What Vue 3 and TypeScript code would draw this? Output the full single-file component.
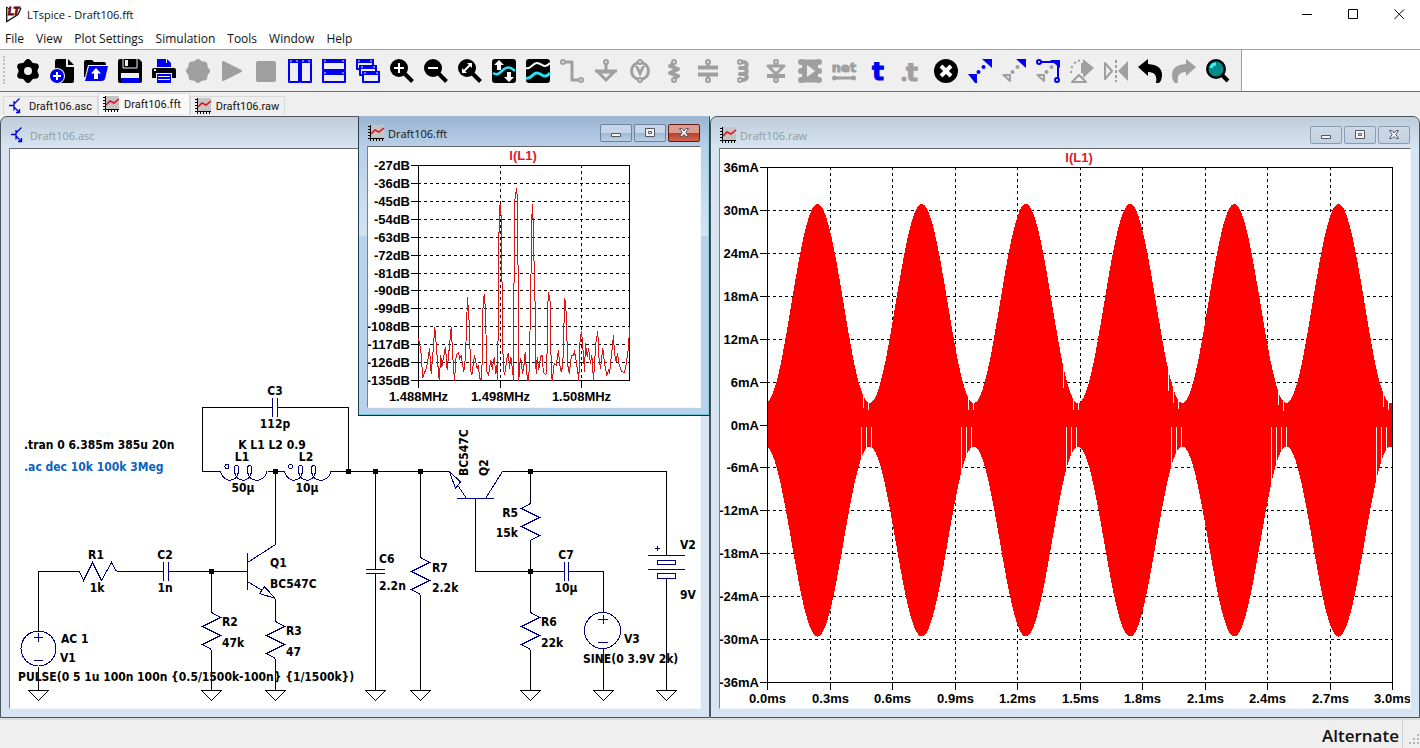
<script setup lang="ts">
interface Shape { d: string; f?: string; s?: string; w?: number }
interface Tool { name: string; off?: boolean; shapes: Shape[]; text?: string; size?: number; tx?: number; ty?: number; color?: string }
interface Label { t: string; x: number; y: number; a?: 'start' | 'middle' | 'end'; c?: string; v?: boolean }

const K = '#000'
const B = '#0000f0'
const G = '#9f9f9f'
const P = '#efefef'

const disc = (x: number, y: number, r: number): string =>
  `M${x - r} ${y}a${r} ${r} 0 1 0 ${2 * r} 0a${r} ${r} 0 1 0 ${-2 * r} 0Z`

function gear(teeth: number, base: number, depth: number): string {
  const pts: string[] = []
  for (let i = 0; i < 96; i++) {
    const a = (i * Math.PI) / 48
    const r = base + depth * Math.cos(teeth * (a - Math.PI / 2))
    pts.push(`${(12 + r * Math.cos(a)).toFixed(2)} ${(12 + r * Math.sin(a)).toFixed(2)}`)
  }
  return 'M' + pts.join('L') + 'Z'
}

const lens: Shape[] = [{ d: disc(9, 9, 9), f: K }, { d: 'M14 14L22.5 22.5', s: K, w: 4 }]
const pin = (x: number, y: number, c: string = G): Shape => ({ d: disc(x, y, 2), s: c, f: P, w: 2 })
const panel = (x: number, y: number, w: number, h: number): Shape[] => [
  { d: `M${x + 1} ${y + 1}h${w - 2}v${h - 2}h${2 - w}Z`, f: P, s: B, w: 2 },
  { d: `M${x} ${y}h${w}v4h${-w}Z`, f: B },
  { d: `M${x + 2} ${y + 2}h2M${x + w - 4} ${y + 2}h2`, s: P, w: 1 },
]

const tools: Tool[] = [
  { name: 'Settings', shapes: [{ d: gear(6, 10.8, 1.3), f: K }, { d: disc(12, 12, 4), f: P }] },
  { name: 'New schematic', shapes: [
    { d: 'M7 0H16V8H24V22Q24 24 22 24H5V2Q5 0 7 0Z', f: K }, { d: 'M18 0L24 6H18Z', f: K },
    { d: disc(7, 17, 8), f: P }, { d: disc(7, 17, 7), f: B }, { d: 'M7 13V21M3 17H11', s: '#fff', w: 2 }] },
  { name: 'Open', shapes: [
    { d: 'M0 3Q0 1 2 1H8L10 3H20Q22 3 22 5V6H4L1 18H0Z', f: K }, { d: 'M5 7H24L21 20Q20 22 18 22H1Z', f: B },
    { d: 'M12 9L17 14.5H14V20H10V14.5H7Z', f: '#fff' }] },
  { name: 'Save', shapes: [
    { d: 'M2 0H21L24 3V22Q24 24 22 24H2Q0 24 0 22V2Q0 0 2 0Z', f: K },
    { d: 'M5 0V9H19V0', s: P, w: 1 }, { d: 'M7 1H10V7H7Z', f: P },
    { d: 'M3 14H21V24H3Z', f: P }, { d: 'M3 19H21V24H3Z', f: B }] },
  { name: 'Print', shapes: [
    { d: 'M5 0H14V4H19V8H5Z', f: B }, { d: 'M15 0L19 4H15Z', f: B }, { d: 'M2 9H22Q24 9 24 11V19H0V11Q0 9 2 9Z', f: K },
    { d: 'M2 11h2', s: P, w: 2 }, { d: 'M4 14H20V24H4Z', f: P }, { d: 'M5 15H19V24H5Z', f: B }, { d: 'M6 17.5H18M6 20.5H18', s: P, w: 1 }] },
  { name: 'Component', off: true, shapes: [{ d: gear(8, 11.3, 0.8), f: G }] },
  { name: 'Run', off: true, shapes: [{ d: 'M3 3L21 12L3 21Z', f: G, s: G, w: 2 }] },
  { name: 'Stop', off: true, shapes: [{ d: 'M4 4H20V21H4Z', f: G, s: G, w: 4 }] },
  { name: 'Tile vertically', shapes: [...panel(0, 0, 12, 24), ...panel(12, 0, 12, 24)] },
  { name: 'Tile horizontally', shapes: [...panel(0, 0, 24, 12), ...panel(0, 12, 24, 12)] },
  { name: 'Cascade', shapes: [...panel(0, 0, 18, 11), ...panel(3, 6, 18, 11), ...panel(6, 12, 18, 12)] },
  { name: 'Zoom in', shapes: [...lens, { d: 'M9 4V14M4 9H14', s: '#fff', w: 2 }] },
  { name: 'Zoom out', shapes: [...lens, { d: 'M4 9H14', s: '#fff', w: 2 }] },
  { name: 'Zoom to fit', shapes: [...lens, { d: 'M6 12L12 6', s: '#fff', w: 2 }, { d: 'M9 4H14V9ZM4 9V14H9Z', f: '#fff' }] },
  { name: 'Autorange', shapes: [
    { d: 'M3 0H21Q24 0 24 3V21Q24 24 21 24H3Q0 24 0 21V3Q0 0 3 0Z', f: K },
    { d: 'M1 14C5 17 8 14 11 11S18 7 23 12', s: '#26e2f4', w: 2.5 },
    { d: 'M7 1L12 6H9V11H5V6H2ZM17 23L12 18H15V13H19V18H22Z', f: '#fff' }] },
  { name: 'Visible traces', shapes: [
    { d: 'M3 0H21Q24 0 24 3V21Q24 24 21 24H3Q0 24 0 21V3Q0 0 3 0Z', f: K },
    { d: 'M0 9C5 11 6 4 11 4S18 11 24 4', s: '#fff', w: 2 }, { d: 'M0 19C5 21 6 14 11 14S18 21 24 14', s: '#26e2f4', w: 3 }] },
  { name: 'Wire', off: true, shapes: [{ d: 'M4 3H12V21H20', s: G, w: 3 }, pin(3, 3), pin(21, 21)] },
  { name: 'Ground', off: true, shapes: [{ d: 'M12 4V12', s: G, w: 3 }, { d: 'M4 13H20L12 21Z', s: G, w: 3 }, { d: 'M1 12H23', s: G, w: 3 }, pin(12, 3)] },
  { name: 'Voltage', off: true, shapes: [{ d: disc(12, 12, 8.5), s: G, w: 3 }, { d: 'M7 7H10L12 11L14 7H17L12 18Z', f: G }, pin(12, 3), pin(12, 21)] },
  { name: 'Resistor', off: true, shapes: [{ d: 'M12 4L8 7L16 10L8 14L16 17L12 20', s: G, w: 4 }, pin(12, 3), pin(12, 21)] },
  { name: 'Capacitor', off: true, shapes: [{ d: 'M12 3V8M12 16V21', s: G, w: 3 }, { d: 'M2 8.5H22M2 15.5H22', s: G, w: 4 }, pin(12, 3), pin(12, 21)] },
  { name: 'Inductor', off: true, shapes: [{ d: 'M11 3H13C18 3 18 9 13 9H10H13C18 9 18 15 13 15H10H13C18 15 18 21 13 21H11', s: G, w: 4 }, pin(10, 3), pin(10, 21)] },
  { name: 'Diode', off: true, shapes: [{ d: 'M12 3V6M12 16V21', s: G, w: 3 }, { d: 'M4 7H20L12 15Z', s: G, w: 3 }, { d: 'M3 17H21', s: G, w: 4 }, pin(12, 3), pin(12, 21)] },
  { name: 'Part', off: true, shapes: [{ d: 'M3 3H21M3 12H21M3 21H21', s: G, w: 5 }, { d: 'M4 1H20V23H4Z', f: G }, { d: disc(3, 3, 3) + disc(3, 12, 3) + disc(3, 21, 3) + disc(21, 3, 3) + disc(21, 12, 3) + disc(21, 21, 3), f: G }, { d: 'M9 6L17 12L9 18Z', f: P }] },
  { name: 'Net name', off: true, text: 'net', size: 13, tx: 12, ty: 13, color: G, shapes: [{ d: 'M3 19H21', s: G, w: 3 }, { d: disc(2.5, 19, 2.5), f: G }, { d: disc(21.5, 19, 2.5), f: G }] },
  { name: 'Text', text: 't', size: 25, tx: 12, ty: 21, color: B, shapes: [] },
  { name: 'Directive', off: true, text: 't', size: 25, tx: 12, ty: 22, color: G, shapes: [{ d: disc(4, 20, 2.5), f: G }] },
  { name: 'Delete', shapes: [{ d: disc(12, 12, 12), f: K }, { d: 'M7 7L17 17M17 7L7 17', s: '#fff', w: 4 }] },
  { name: 'Move', shapes: [{ d: 'M14 0H24V9Z', f: B }, { d: 'M0 15H9V24H7Z', f: B }, { d: disc(10.5, 13, 2), f: B }, { d: disc(15.5, 8, 2), f: B }] },
  { name: 'Duplicate', shapes: [{ d: 'M14 0H24V9Z', f: B }, { d: 'M1.5 16H8V22Z', s: G, w: 2 }, { d: disc(10.5, 13, 2), f: G }, { d: disc(15.5, 8, 2), f: G }] },
  { name: 'Drag', shapes: [{ d: 'M14 1H24V9Z', f: B }, { d: 'M3 3H22V21', s: B, w: 2 }, pin(3, 3, B), pin(21, 21, B), { d: 'M1.5 16H8V22Z', s: G, w: 2 }, { d: disc(10.5, 13, 2), f: G }, { d: disc(15.5, 8, 2), f: G }] },
  { name: 'Rotate', off: true, shapes: [{ d: 'M13 0L24 9L13 19Z', f: G }, { d: 'M11 4H16V14H11Z', f: G }, { d: 'M1 14v-2M1.5 9l1-2M4 4.5l2-1.5M8 2l2-.5', s: G, w: 2 }, { d: 'M2 23H16L9 16Z', s: G, f: P, w: 2 }] },
  { name: 'Mirror', off: true, shapes: [{ d: 'M1 4L8 12L1 20Z', s: G, w: 2 }, { d: 'M24 2V22L14 12Z', f: G }, { d: 'M12 1v3M12 6v3M12 11v3M12 16v3M12 21v2', s: G, w: 2 }] },
  { name: 'Undo', shapes: [{ d: 'M0 8L10 0V5Q24 6 24 16Q24 21 21 24H18Q20 13 10 13V17Z', f: K }] },
  { name: 'Redo', off: true, shapes: [{ d: 'M24 8L14 0V5Q0 6 0 16Q0 21 3 24H6Q4 13 14 13V17Z', f: G }] },
  { name: 'Search', shapes: [{ d: disc(10, 10, 10), f: K }, { d: 'M16 16L22 22', s: K, w: 4 }, { d: disc(10, 10, 7.5), f: '#008c8c' }, { d: 'M5 9Q6 5 10 5', s: '#3ff0f0', w: 3 }] },
]

const menus = ['File', 'View', 'Plot Settings', 'Simulation', 'Tools', 'Window', 'Help']
const tabs = [
  { name: 'Draft106.asc', kind: 'asc', active: false },
  { name: 'Draft106.fft', kind: 'plot', active: true },
  { name: 'Draft106.raw', kind: 'plot', active: false },
]

const axisIcon = 'M2.5 0V13.5H16M0 1.5H2M0 4.5H2M0 7.5H2M0 10.5H2M0 13.5H2M2.5 14V16M5.5 14V16M8.5 14V16M11.5 14V16M14.5 14V16'
const bjtIcon = 'M1 7.5H6M6 3V12.5M6 6L11.5 .5M6 9L11.5 14.5M11.5 11V14.5H8'

/* ---- schematic ---- */
const wires = [
  'M202.5 471.5V407.5H272.5M277.5 407.5H348.5V471.5M202.5 471.5H220.5M267.5 471.5H284.5M330.5 471.5H449.5',
  'M275.5 471.5V544.5M38.5 630.5V571.5H79.5M116.5 571.5H163.5M168.5 571.5H247.5M211.5 571.5V612.5M211.5 649.5V690.5',
  'M275.5 598.5V621.5M275.5 658.5V690.5M38.5 666.5V690.5M375.5 471.5V569.5M375.5 573.5V690.5',
  'M420.5 471.5V557.5M420.5 594.5V690.5M502.5 471.5H666.5V555.5M666.5 578.5V690.5M475.5 498.5V571.5H564.5',
  'M530.5 471.5V503.5M530.5 539.5V612.5M530.5 649.5V690.5M568.5 571.5H603.5V612.5M603.5 648.5V690.5',
].join('')

const zig = (x: number, y: number, s: number): string =>
  `M${x} ${y}l${9 * s} 5l${-18 * s} 9l${18 * s} 9l${-18 * s} 9l${9 * s} 5`
const coil = (x: number): string =>
  `M${x} 471.5C${x + 2} 479 ${x + 9} 483 ${x + 15} 478C${x + 19} 474 ${x + 19} 465 ${x + 16} 465C${x + 13} 465 ${x + 13} 474 ${x + 17} 478` +
  `C${x + 21} 481 ${x + 25} 481 ${x + 28} 478C${x + 32} 474 ${x + 32} 465 ${x + 29.5} 465C${x + 26} 465 ${x + 26} 474 ${x + 30} 478C${x + 36} 483 ${x + 45} 479 ${x + 46.5} 471.5`

const parts = [
  'M272.5 398V417M277.5 398V417M163.5 562V581M168.5 562V581M564.5 562V581M568.5 562V581M366 569.5H385M366 573.5H385',
  'M79.5 571.5l4 9l9 -18l9 18l10 -18l5 9',
  zig(211.5, 612.5, 1), zig(275.5, 621.5, 1), zig(420.5, 557.5, 1), zig(530.5, 503.5, -1), zig(530.5, 612.5, 1),
  'M247.5 553V590M247.5 562.5L275.5 544.5M247.5 581.5L261.5 590M275.5 598.5L259.5 593.5L264.5 587L275.5 598.5',
  'M457 498.5H494M485.5 498.5L502.5 471.5M466.5 498.5L457.5 485M449.5 471.5L455.5 488.5L460.5 482L449.5 471.5',
  coil(220.5), coil(284.5), disc(227, 466.5, 2), disc(290.5, 466.5, 2),
  disc(38.5, 648.5, 17.5), disc(602.5, 630.5, 18),
  'M34 637.5H43M38.5 633V642M34 660.5H43M598 619.5H608M603.5 615V624M598 642.5H608',
  'M648 555.5H685M648 569.5H685M657.5 560.5H675.5V564.5H657.5ZM657.5 573.5H675.5V578.5H657.5ZM655 548.5H660M657.5 546V551',
].join('')

const grounds = [38.5, 211.5, 275.5, 375.5, 420.5, 530.5, 603.5, 666.5].map(x => `M${x - 10} 690.5H${x + 10}L${x} 700.5Z`).join('')
const nodes: [number, number][] = [[275.5, 471.5], [348.5, 471.5], [375.5, 471.5], [420.5, 471.5], [530.5, 471.5], [211.5, 571.5], [530.5, 571.5]]

const labels: Label[] = [
  { t: '.tran 0 6.385m 385u 20n', x: 24, y: 449 }, { t: '.ac dec 10k 100k 3Meg', x: 24, y: 471, c: '#0a63c2' },
  { t: 'C3', x: 275, y: 395, a: 'middle' }, { t: '112p', x: 275, y: 428, a: 'middle' }, { t: 'K L1 L2 0.9', x: 272, y: 449, a: 'middle' },
  { t: 'L1', x: 242, y: 461, a: 'middle' }, { t: 'L2', x: 306, y: 461, a: 'middle' }, { t: '50µ', x: 243, y: 492, a: 'middle' }, { t: '10µ', x: 307, y: 492, a: 'middle' },
  { t: 'R1', x: 96, y: 559, a: 'middle' }, { t: '1k', x: 97, y: 592, a: 'middle' }, { t: 'C2', x: 165, y: 559, a: 'middle' }, { t: '1n', x: 165, y: 592, a: 'middle' },
  { t: 'Q1', x: 270, y: 567 }, { t: 'BC547C', x: 270, y: 588 }, { t: 'R2', x: 222, y: 626 }, { t: '47k', x: 222, y: 647 },
  { t: 'R3', x: 286, y: 635 }, { t: '47', x: 286, y: 656 }, { t: 'AC 1', x: 61, y: 643 }, { t: 'V1', x: 60, y: 662 },
  { t: 'PULSE(0 5 1u 100n 100n {0.5/1500k-100n} {1/1500k})', x: 18, y: 681 },
  { t: 'C6', x: 379, y: 563 }, { t: '2.2n', x: 379, y: 590 }, { t: 'R7', x: 432, y: 572 }, { t: '2.2k', x: 432, y: 592 },
  { t: 'R5', x: 518, y: 517, a: 'end' }, { t: '15k', x: 518, y: 537, a: 'end' }, { t: 'R6', x: 541, y: 626 }, { t: '22k', x: 541, y: 647 },
  { t: 'C7', x: 566, y: 559, a: 'middle' }, { t: '10µ', x: 566, y: 592, a: 'middle' }, { t: 'V3', x: 624, y: 643 }, { t: 'SINE(0 3.9V 2k)', x: 583, y: 663 },
  { t: 'V2', x: 680, y: 549 }, { t: '9V', x: 680, y: 599 },
  { t: 'BC547C', x: 468, y: 476, v: true }, { t: 'Q2', x: 488, y: 476, v: true },
]

/* ---- spectrum ---- */
const dbTicks = Array.from({ length: 13 }, (_, i) => ({ t: `${-27 - 9 * i}dB`, y: 165.5 + Math.round((215 * i) / 12) }))
const mhzTicks = [{ t: '1.488MHz', x: 418.5 }, { t: '1.498MHz', x: 500.5 }, { t: '1.508MHz', x: 581.5 }]
const spectrum = [
  0, 517, 7, 554, 13, 636, 25, 604, 33, 549, 38, 624, 43, 569, 49, 486, 56, 574, 62, 645, 67, 569, 70, 604, 81, 544, 86, 614, 98, 484, 103, 574,
  108, 645, 113, 569, 120, 561, 124, 579, 128, 572, 136, 619, 141, 574, 147, 396, 153, 484, 156, 614, 160, 629, 168, 569, 176, 609, 179, 599,
  184, 639, 190, 645, 193, 434, 197, 386, 201, 434, 205, 619, 210, 629, 217, 584, 222, 612, 224, 589, 228, 574, 231, 624, 234, 599, 237, 645,
  240, 414, 242, 129, 245, 117, 248, 154, 251, 394, 254, 604, 258, 629, 267, 569, 270, 564, 273, 609, 277, 574, 282, 614, 285, 645, 286, 424,
  289, 104, 294, 69, 297, 99, 299, 374, 301, 645, 304, 594, 307, 579, 312, 624, 316, 604, 320, 559, 323, 604, 327, 645, 331, 645, 336, 434,
  340, 154, 343, 117, 345, 254, 349, 334, 351, 574, 353, 624, 356, 574, 361, 614, 366, 574, 372, 569, 374, 619, 380, 627, 385, 624, 387, 434,
  390, 381, 396, 414, 398, 624, 401, 645, 407, 594, 413, 599, 420, 554, 423, 594, 428, 619, 433, 599, 437, 454, 439, 397, 444, 454, 447, 594,
  452, 624, 459, 569, 464, 569, 468, 559, 472, 579, 478, 619, 481, 645, 484, 534, 489, 496, 494, 559, 498, 619, 501, 534, 506, 574, 510, 549,
  516, 594, 520, 569, 525, 645, 532, 534, 538, 498, 541, 574, 546, 609, 553, 549, 558, 594, 565, 629, 570, 614, 573, 624, 581, 549, 585, 509,
  588, 564, 593, 589, 597, 562, 602, 599, 610, 619, 618, 621, 622, 604, 629, 554, 634, 484,
]
const spectrumPath = spectrum.reduce((p, v, i) => i % 2 === 0
  ? `${p}${i ? 'L' : 'M'}${(418.5 + v / 3).toFixed(1)} `
  : `${p}${(165.5 + v / 3).toFixed(1)}`, '')

/* ---- transient ---- */
const mATicks = Array.from({ length: 13 }, (_, i) => ({ t: `${36 - 6 * i}mA`, y: 167.5 + Math.round((515 * i) / 12) }))
const msTicks = Array.from({ length: 11 }, (_, i) => ({ t: `${(0.3 * i).toFixed(1)}ms`, x: 767.5 + Math.round(62.5 * i) }))
const phase = (x: number): number => Math.cos((2 * Math.PI * (x - 817)) / 104.2)
const upper = (x: number): number => Math.round(425 - (121.5 + 99.5 * phase(x)))
const lower = (x: number): number => Math.round(425 + (116.5 + 95 * phase(x)))

function envelope(): string {
  let top = ''
  let bottom = ''
  for (let x = 767; x < 1393; x++) {
    top += `L${x} ${upper(x)}H${x + 1}`
    bottom = `L${x + 1} ${lower(x)}H${x}` + bottom
  }
  return 'M767 425' + top + bottom + 'Z'
}
const envelopePath = envelope()
const upperGaps = [[863, 408], [868, 410], [968, 410], [973, 410], [1063, 388], [1073, 410], [1078, 410], [1168, 391], [1173, 403], [1178, 409], [1278, 405], [1283, 411], [1383, 407], [1388, 410]]
  .map(([x, y]) => `M${x + 0.5} ${upper(x) - 2}V${y}`).join('')
const lowerGaps = [861, 866, 871, 961, 966, 971, 1066, 1071, 1076, 1171, 1176, 1181, 1271, 1276, 1281, 1286, 1376, 1381, 1386]
  .map(x => `M${x + 0.5} 427V${lower(x) + 2}`).join('')
</script>

<template>
  <div class="app">
    <header class="titlebar">
      <svg class="logo" viewBox="0 0 16 16" aria-hidden="true">
        <path d="M.7 1V15.5L12 8.5L15 2" fill="none" stroke="#111" stroke-width="1.3" />
        <path d="M.7 1L4 4" fill="none" stroke="#111" />
        <text x="2" y="9" class="logo-text">LT</text>
      </svg>
      <h1>LTspice - Draft106.fft</h1>
      <div class="sysbuttons">
        <button aria-label="Minimize"><svg viewBox="0 0 11 11"><path d="M0 5.5H10" /></svg></button>
        <button aria-label="Maximize"><svg viewBox="0 0 11 11"><path d="M.5 .5H9.5V9.5H.5Z" /></svg></button>
        <button aria-label="Close"><svg viewBox="0 0 11 11"><path d="M.5 .5L10 10M10 .5L.5 10" /></svg></button>
      </div>
    </header>

    <nav class="menubar">
      <button v-for="m in menus" :key="m">{{ m }}</button>
    </nav>

    <div class="toolrow">
      <div class="toolbar" role="toolbar" aria-label="Standard">
        <button v-for="t in tools" :key="t.name" :aria-label="t.name" :disabled="t.off">
          <svg viewBox="0 0 24 24">
            <path v-for="(s, i) in t.shapes" :key="i" :d="s.d" :fill="s.f || 'none'" :stroke="s.s || 'none'" :stroke-width="s.w || 0" stroke-linejoin="round" />
            <text v-if="t.text" :x="t.tx" :y="t.ty" :font-size="t.size" :fill="t.color" :stroke="t.color" text-anchor="middle" class="glyph">{{ t.text }}</text>
          </svg>
        </button>
      </div>
    </div>

    <div class="tabs" role="tablist">
      <button v-for="t in tabs" :key="t.name" role="tab" :aria-selected="t.active" :class="{ active: t.active }">
        <svg viewBox="0 0 16 16" class="docicon">
          <path v-if="t.kind === 'asc'" :d="bjtIcon" class="bjt" />
          <template v-else>
            <path d="M3 0H16V13H3Z" fill="#c4c4c4" />
            <path :d="axisIcon" class="axis" />
            <path d="M3 9L7 5L11 7L16 3" class="wave" />
          </template>
        </svg>
        <span>{{ t.name }}</span>
      </button>
    </div>

    <main class="workspace">
      <section class="win">
        <div class="wintitle">
          <svg viewBox="0 0 16 16" class="docicon"><path :d="bjtIcon" class="bjt" /></svg>
          <h2>Draft106.asc</h2>
        </div>
        <div class="client">
          <svg viewBox="10 149 690 559" preserveAspectRatio="xMinYMin meet" class="canvas schematic" shape-rendering="crispEdges">
            <path :d="wires" class="wire" />
            <path :d="grounds" class="wire" />
            <path :d="parts" class="part" />
            <rect v-for="(n, i) in nodes" :key="i" :x="n[0] - 2.5" :y="n[1] - 2.5" width="5" height="5" />
            <text v-for="(l, i) in labels" :key="i" :x="l.x" :y="l.y" :text-anchor="l.a || 'start'" :fill="l.c || '#000'" :transform="l.v ? `rotate(-90 ${l.x} ${l.y})` : undefined">{{ l.t }}</text>
          </svg>
        </div>
      </section>

      <section class="win">
        <div class="wintitle">
          <svg viewBox="0 0 16 16" class="docicon">
            <path d="M3 0H16V13H3Z" fill="#c4c4c4" />
            <path :d="axisIcon" class="axis" />
            <path d="M3 9L7 5L11 7L16 3" class="wave" />
          </svg>
          <h2>Draft106.raw</h2>
          <div class="winbuttons">
            <button aria-label="Minimize window"><svg viewBox="0 0 14 12"><path d="M2.5 6.5H11.5V9.5H2.5Z" /></svg></button>
            <button aria-label="Restore window"><svg viewBox="0 0 14 12"><path d="M2.5 1.5H11.5V9.5H2.5ZM5.5 4.5H8.5V6.5H5.5Z" /></svg></button>
            <button aria-label="Close window"><svg viewBox="0 0 14 12"><path d="M2.5 1.5H5L7 4L9 1.5H11.5L8.8 5.5L11.5 9.5H9L7 7.5L5 9.5H2.5L5.2 5.5Z" /></svg></button>
          </div>
        </div>
        <div class="client">
          <svg viewBox="720 149 690 559" preserveAspectRatio="xMinYMin meet" class="canvas plot" shape-rendering="crispEdges">
            <path v-for="m in mATicks" :key="m.t" :d="`M760 ${m.y}H767`" class="wire" />
            <path v-for="m in mATicks" :key="'g' + m.t" :d="`M767 ${m.y}H1392`" class="grid" />
            <path v-for="m in msTicks" :key="m.t" :d="`M${m.x} 682V690`" class="wire" />
            <path v-for="m in msTicks" :key="'g' + m.t" :d="`M${m.x} 167V682`" class="grid" />
            <path :d="envelopePath" fill="#f00" />
            <path :d="upperGaps + lowerGaps" stroke="#fff3f0" fill="none" />
            <path d="M767.5 425V167.5H1392.5V682.5H767.5V425" class="wire" />
            <text v-for="m in mATicks" :key="'t' + m.t" x="759" :y="m.y + 4" text-anchor="end">{{ m.t }}</text>
            <text v-for="m in msTicks" :key="'t' + m.t" :x="m.x" y="703" text-anchor="middle">{{ m.t }}</text>
            <text x="1079" y="162" text-anchor="middle" class="trace">I(L1)</text>
          </svg>
        </div>
      </section>

      <section class="win front">
        <div class="wintitle">
          <svg viewBox="0 0 16 16" class="docicon">
            <path d="M3 0H16V13H3Z" fill="#c4c4c4" />
            <path :d="axisIcon" class="axis" />
            <path d="M3 9L7 5L11 7L16 3" class="wave" />
          </svg>
          <h2>Draft106.fft</h2>
          <div class="winbuttons">
            <button aria-label="Minimize window"><svg viewBox="0 0 14 12"><path d="M2.5 6.5H11.5V9.5H2.5Z" /></svg></button>
            <button aria-label="Restore window"><svg viewBox="0 0 14 12"><path d="M2.5 1.5H11.5V9.5H2.5ZM5.5 4.5H8.5V6.5H5.5Z" /></svg></button>
            <button aria-label="Close window" class="close"><svg viewBox="0 0 14 12"><path d="M2.5 1.5H5L7 4L9 1.5H11.5L8.8 5.5L11.5 9.5H9L7 7.5L5 9.5H2.5L5.2 5.5Z" /></svg></button>
          </div>
        </div>
        <div class="client">
          <svg viewBox="368 147 332 260" preserveAspectRatio="xMinYMin meet" class="canvas plot" shape-rendering="crispEdges">
            <path v-for="m in dbTicks" :key="m.t" :d="`M411 ${m.y}H418`" class="wire" />
            <path v-for="m in dbTicks" :key="'g' + m.t" :d="`M418 ${m.y}H630`" class="grid" />
            <path v-for="m in mhzTicks" :key="m.t" :d="`M${m.x} 380V388`" class="wire" />
            <path v-for="m in mhzTicks" :key="'g' + m.t" :d="`M${m.x} 165V380`" class="grid" />
            <path d="M418.5 165.5H629.5V380.5H418.5Z" class="wire" />
            <path :d="spectrumPath" fill="none" stroke="#dc1414" stroke-width="1" />
            <text v-for="m in dbTicks" :key="'t' + m.t" x="410" :y="m.y + 4" text-anchor="end">{{ m.t }}</text>
            <text v-for="m in mhzTicks" :key="'t' + m.t" :x="m.x" y="401" text-anchor="middle">{{ m.t }}</text>
            <text x="523" y="160" text-anchor="middle" class="trace">I(L1)</text>
          </svg>
        </div>
      </section>
    </main>

    <footer class="status">
      <span>Alternate</span>
      <svg viewBox="0 0 12 12" aria-hidden="true"><path d="M9 1h2M9 5h2M5 5h2M9 9h2M5 9h2M1 9h2" stroke="#b5b5b5" stroke-width="2" /></svg>
    </footer>
  </div>
</template>

<style>
body { margin: 0; overflow: hidden; }
</style>

<style scoped>
.app { display: flex; flex-direction: column; height: 100vh; background: #fff; color: #111; font-family: "Open Sans", "Noto Sans", sans-serif; font-size: 12px; }
button { font: inherit; color: inherit; background: none; border: 0; padding: 0; margin: 0; }
h1, h2 { font-size: 11px; font-weight: 400; margin: 0; }
svg { display: block; }

.titlebar { display: flex; align-items: center; height: 28px; padding-left: 6px; }
.logo { width: 16px; height: 16px; margin-right: 5px; overflow: visible; }
.logo-text { font: italic 700 10px "Liberation Sans", sans-serif; fill: #6a0c10; stroke: #6a0c10; stroke-width: 1; }
.sysbuttons { margin-left: auto; display: flex; }
.sysbuttons button { width: 46px; height: 26px; box-sizing: border-box; padding-left: 4px; display: flex; align-items: center; justify-content: center; }
.sysbuttons svg { width: 11px; height: 11px; }
.sysbuttons path { fill: none; stroke: #000; }

.menubar { display: flex; gap: 12px; height: 21px; padding-left: 5px; border-bottom: 1px solid #a0a0a0; }

.toolrow { display: flex; height: 41px; border-bottom: 1px solid #6e6e6e; }
.toolbar { display: flex; padding: 9px 6px 0 11px; background: #efefef; border-right: 1px solid #a0a0a0; position: relative; }
.toolbar::before { content: ""; position: absolute; left: 3px; top: 6px; height: 28px; border-left: 2px dotted #bdbdbd; }
.toolbar button { width: 34px; height: 24px; display: flex; justify-content: center; }
.toolbar svg { width: 24px; height: 24px; overflow: visible; }
.glyph { font-family: "DejaVu Sans", sans-serif; font-weight: 700; }

.tabs { display: flex; align-items: flex-start; height: 24px; padding-left: 3px; background: #efefef; font-family: Roboto, sans-serif; font-size: 11px; }
.tabs button { display: flex; align-items: center; gap: 5px; height: 19px; margin-top: 4px; padding: 0 5px 0 4px; border: 1px solid #d9d9d9; border-bottom: 0; }
.tabs button.active { height: 21px; margin-top: 1px; padding-right: 8px; background: #fafafa; }
.docicon { width: 16px; height: 16px; overflow: visible; flex: none; }
.bjt { fill: none; stroke: #0000e0; stroke-width: 1.3; }
.axis { fill: none; stroke: #000; }
.wave { fill: none; stroke: #e01020; stroke-width: 1.6; }

.workspace { flex: 1; min-height: 0; display: grid; grid-template-columns: 1fr 1fr; position: relative; background: #f0f0f0; }
.win { display: flex; flex-direction: column; min-width: 0; min-height: 0; box-sizing: border-box; padding: 0 8px 8px; border: 1px solid #4c545c; border-radius: 7px 7px 0 0; background: linear-gradient(#bfcddb, #d7e4f2 31px); }
.wintitle { display: flex; align-items: center; gap: 4px; height: 31px; padding: 5px 1px 0; box-sizing: border-box; }
.wintitle h2 { color: #929aa3; }
.client { flex: 1; min-height: 0; background: #fff; border: 1px solid #f2f7fc; border-top-color: #646464; border-left-color: #7c8187; }
.canvas { width: 100%; height: 100%; }
.winbuttons { margin-left: auto; display: flex; gap: 2px; }
.winbuttons button { width: 32px; height: 18px; box-sizing: border-box; border: 1px solid #8b9bb0; border-radius: 2px; display: flex; align-items: center; justify-content: center; background: linear-gradient(#cbd8e6, #c3d2e2); }
.winbuttons svg { width: 14px; height: 12px; }
.winbuttons path { fill: #f4f4f4; stroke: #535666; }

.front { position: absolute; left: 358px; top: 0; width: 352px; height: 300px; padding-bottom: 7px; border-color: #a3bcd8 #24404e #0e2a33 #24404e; border-radius: 0; background: linear-gradient(#9ab4d1, #b9cfe8 29px, #d3e3f3 119px, #b9d1ea 119px); box-shadow: inset 0 -1px #6cc8d8, inset -1px 0 #8fd0e0; }
.front .wintitle { height: 29px; padding-top: 3px; }
.front .wintitle h2 { color: #111; }
.front .winbuttons button { background: linear-gradient(#c6d6e8 50%, #9fb7d2 50%, #bcd0e6); border-color: #6c819c; }
.front .winbuttons button.close { background: linear-gradient(#dd9a90 50%, #bd3a26 50%, #d06a50); border-color: #5c1c18; }

.wire { fill: none; stroke: #000; }
.part { fill: none; stroke: #000080; }
.grid { fill: none; stroke: #000; stroke-dasharray: 3 3; }
.schematic text { font: 700 12px "DejaVu Sans Condensed", "Noto Sans", sans-serif; }
.plot text { font: 700 13px "Liberation Sans", Arial, sans-serif; }
.plot .trace { fill: #e8142c; }

.status { display: flex; align-items: center; justify-content: flex-end; height: 30px; background: #efefef; font-size: 17px; font-weight: 600; box-shadow: inset 0 2px 0 #dcdcdc; }
.status span { padding: 6px 3px 0 0; line-height: 24px; border-right: 1px solid #d0d0d0; }
.status svg { width: 12px; height: 12px; margin: 14px 0 0 5px; }
</style>
